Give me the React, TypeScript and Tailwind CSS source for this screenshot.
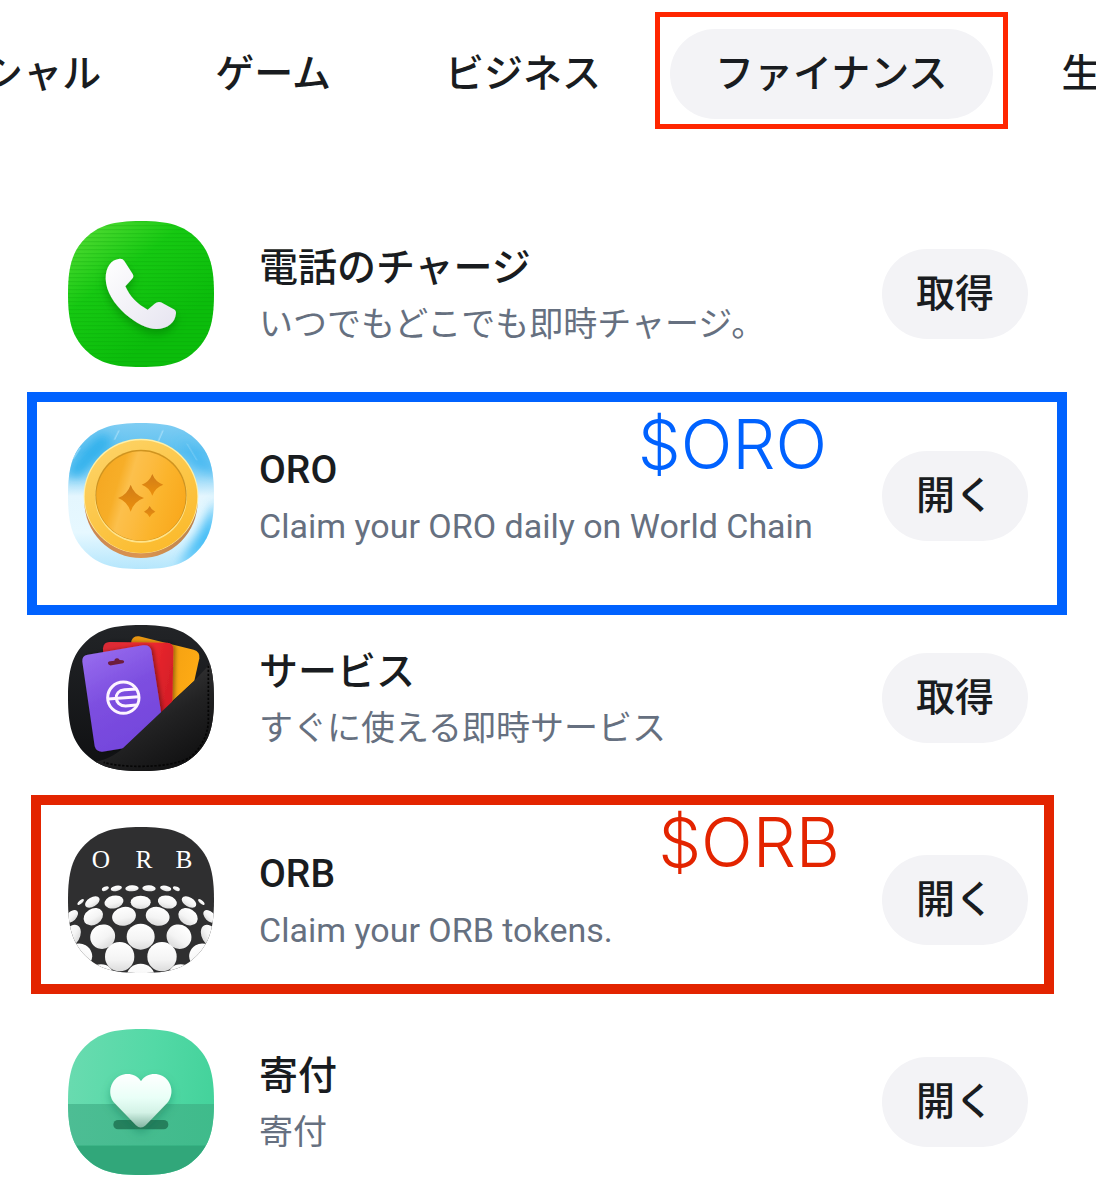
import type { ReactNode } from "react";

const SQUIRCLE =
  "M0 219C0 136 13 91 52 52S136 0 219 0 347 13 386 52 438 136 438 219 425 347 386 386 302 438 219 438 91 425 52 386 0 302 0 219Z";

function IconFrame({ id, label, children }: { id: string; label: string; children: ReactNode }) {
  return (
    <svg viewBox="0 0 438 438" role="img" aria-label={label} className="size-[146px] shrink-0">
      <defs>
        <clipPath id={id}>
          <path d={SQUIRCLE} />
        </clipPath>
      </defs>
      <g clipPath={`url(#${id})`}>{children}</g>
    </svg>
  );
}

function PhoneIcon() {
  return (
    <IconFrame id="phone-clip" label="電話">
      <defs>
        <linearGradient id="phone-bg" x1="0" y1="0" x2="0.6" y2="0.8">
          <stop offset="0" stopColor="#5fe03a" />
          <stop offset="0.5" stopColor="#16c912" />
          <stop offset="1" stopColor="#0bbd0b" />
        </linearGradient>
        <linearGradient id="phone-fg" x1="0" y1="0" x2="1" y2="1">
          <stop offset="0" stopColor="#ffffff" />
          <stop offset="1" stopColor="#e6e4f0" />
        </linearGradient>
        <pattern id="phone-lines" width="10" height="12" patternUnits="userSpaceOnUse">
          <rect width="10" height="4" fill="#069a06" opacity="0.22" />
        </pattern>
        <filter id="phone-shadow" x="-30%" y="-30%" width="160%" height="170%">
          <feDropShadow dx="0" dy="14" stdDeviation="14" floodColor="#046b04" floodOpacity="0.5" />
        </filter>
      </defs>
      <rect width="438" height="438" fill="url(#phone-bg)" />
      <rect width="438" height="438" fill="url(#phone-lines)" />
      <g transform="translate(-53 -45)">
        <path
          d="M166 218C166 182 182 161 208 158Q217 157 222 165L247 204Q252 212 245 219L225 241C238 270 260 294 292 311L313 293Q321 286 332 289L369 309Q378 313 377 322C375 350 352 369 318 369C268 369 168 296 166 218Z"
          fill="url(#phone-fg)"
          filter="url(#phone-shadow)"
        />
      </g>
    </IconFrame>
  );
}

function CoinIcon() {
  return (
    <IconFrame id="coin-clip" label="コイン">
      <defs>
        <linearGradient id="coin-sky" x1="0" y1="0" x2="0" y2="1">
          <stop offset="0" stopColor="#7fcdf3" />
          <stop offset="0.2" stopColor="#5cc0f0" />
          <stop offset="0.36" stopColor="#8fd5f7" />
          <stop offset="0.5" stopColor="#e4f6fe" />
          <stop offset="0.75" stopColor="#e6f8ff" />
          <stop offset="1" stopColor="#b5e6fc" />
        </linearGradient>
        <linearGradient id="coin-rim" x1="0.2" y1="0" x2="0.8" y2="1">
          <stop offset="0" stopColor="#fdd366" />
          <stop offset="1" stopColor="#fbb929" />
        </linearGradient>
        <linearGradient id="coin-face" x1="0" y1="0.35" x2="1" y2="0.65">
          <stop offset="0" stopColor="#f5a822" />
          <stop offset="0.22" stopColor="#f7ae28" />
          <stop offset="0.34" stopColor="#fcc04c" />
          <stop offset="0.5" stopColor="#fcbb40" />
          <stop offset="0.7" stopColor="#fbb42c" />
          <stop offset="1" stopColor="#f9a81c" />
        </linearGradient>
        <linearGradient id="coin-star" x1="0" y1="0" x2="0" y2="1">
          <stop offset="0" stopColor="#d07c18" />
          <stop offset="1" stopColor="#ec900c" />
        </linearGradient>
        <linearGradient id="coin-side" x1="0" y1="0" x2="1" y2="0">
          <stop offset="0" stopColor="#c98552" />
          <stop offset="0.5" stopColor="#dc9550" />
          <stop offset="1" stopColor="#b9834f" />
        </linearGradient>
        <filter id="coin-blur" x="-50%" y="-50%" width="200%" height="200%">
          <feGaussianBlur stdDeviation="16" />
        </filter>
      </defs>
      <rect width="438" height="438" fill="url(#coin-sky)" />
      <g transform="translate(-53 -38)">
        <path d="M40 190L150 70L190 90L90 200Z" fill="#2fb0ec" filter="url(#coin-blur)" />
        <path d="M390 90L500 170L500 190L430 170Z" fill="#45b8f2" filter="url(#coin-blur)" />
        <path d="M500 270L400 440L380 480L500 400Z" fill="#45bdf6" filter="url(#coin-blur)" />
        <g stroke="#d8f4ff" strokeWidth="3" opacity="0.7">
          <path d="M206 60L192 88" />
          <path d="M338 60L324 92" />
          <path d="M410 100L440 150" opacity="0.5" />
          <path d="M90 112L68 146" />
        </g>
        <circle cx="272" cy="273" r="170" fill="url(#coin-side)" />
        <circle cx="272" cy="257" r="172" fill="#fff0a8" />
        <circle cx="272" cy="259" r="169" fill="url(#coin-rim)" />
        <circle cx="272" cy="259" r="138" fill="#ffe48a" />
        <circle cx="272" cy="255" r="137" fill="#cf9420" />
        <circle cx="272" cy="257" r="134" fill="url(#coin-face)" />
        <g fill="url(#coin-star)">
          <path d="M241 223Q251 253 281 263Q251 273 241 304Q231 273 203 263Q231 253 241 223Z" />
          <path d="M306 191Q315 215 339 223Q315 231 306 256Q297 231 274 223Q297 215 306 191Z" />
          <path d="M298 287Q303 299 315 304Q303 309 298 321Q293 309 281 304Q293 299 298 287Z" />
        </g>
      </g>
    </IconFrame>
  );
}

function CardsIcon() {
  return (
    <IconFrame id="cards-clip" label="カード">
      <defs>
        <linearGradient id="cards-bg" x1="0" y1="0" x2="0" y2="1">
          <stop offset="0" stopColor="#222427" />
          <stop offset="1" stopColor="#0f1012" />
        </linearGradient>
        <linearGradient id="cards-purple" x1="0.1" y1="0" x2="0.5" y2="1">
          <stop offset="0" stopColor="#9a6ff0" />
          <stop offset="0.5" stopColor="#7d4fe0" />
          <stop offset="1" stopColor="#7445dc" />
        </linearGradient>
        <linearGradient id="cards-red" x1="0" y1="0" x2="1" y2="0.3">
          <stop offset="0" stopColor="#d92a35" />
          <stop offset="0.6" stopColor="#f02a30" />
          <stop offset="1" stopColor="#d81f28" />
        </linearGradient>
        <linearGradient id="cards-orange" x1="0" y1="0" x2="1" y2="0.3">
          <stop offset="0" stopColor="#e89410" />
          <stop offset="1" stopColor="#fdaa14" />
        </linearGradient>
        <linearGradient id="cards-pocket" x1="0.3" y1="0.3" x2="0.7" y2="0.9">
          <stop offset="0" stopColor="#3a3a3b" />
          <stop offset="0.5" stopColor="#222223" />
          <stop offset="1" stopColor="#131314" />
        </linearGradient>
        <filter id="cards-shadow" x="-20%" y="-20%" width="150%" height="140%">
          <feDropShadow dx="6" dy="0" stdDeviation="7" floodColor="#000000" floodOpacity="0.4" />
        </filter>
      </defs>
      <rect width="438" height="438" fill="url(#cards-bg)" />
      <g transform="translate(-53 -38)">
        <path
          d="M243 86Q248 70 266 72L430 112Q450 118 447 138L432 205L340 290L240 240Z"
          fill="url(#cards-orange)"
        />
        <path
          d="M158 108Q160 89 178 89L350 91Q369 92 369 111L366 280L300 330L160 240Z"
          fill="url(#cards-red)"
          filter="url(#cards-shadow)"
        />
        <path
          d="M96 148Q94 130 112 127L278 99Q298 96 303 114L334 312L238 405L156 418Q138 419 133 402Z"
          fill="url(#cards-purple)"
          filter="url(#cards-shadow)"
        />
        <path
          d="M174 156Q170 148 180 147L192 145Q192 139 199 138Q206 137 208 143L218 144Q225 149 218 153L184 159Q177 160 174 156Z"
          fill="#6d1d3c"
        />
        <g fill="none" stroke="#fdf4ff" strokeWidth="9">
          <circle cx="219" cy="256" r="47" />
          <path d="M173 260L265 253" />
          <path d="M260 230L222 232C188 235 190 281 226 281L258 278" />
        </g>
        <path d="M215 410L432 205Q470 165 500 130V490H100V452Q170 450 215 410Z" fill="url(#cards-pocket)" />
        <path
          d="M474 160V330Q470 390 420 435Q370 462 270 462Q200 462 160 450"
          fill="none"
          stroke="#050505"
          strokeWidth="5"
          strokeDasharray="7 5"
        />
      </g>
    </IconFrame>
  );
}

// cx, cy, rx, ry, rotation
const ORB_DOTS: [number, number, number, number, number][] = [
  [165, 223, 11, 6, -25],
  [198, 222, 17, 8, -12],
  [245, 222, 20, 9, -3],
  [296, 222, 20, 9, 3],
  [346, 222, 17, 8, 12],
  [378, 223, 11, 6, 25],
  [91, 263, 12, 5, -42],
  [126, 263, 24, 14, -30],
  [191, 263, 29, 19, -14],
  [271, 264, 30, 20, 0],
  [351, 263, 29, 19, 14],
  [416, 263, 24, 14, 30],
  [453, 263, 12, 5, 42],
  [64, 306, 23, 14, -45],
  [129, 307, 31, 24, -32],
  [221, 306, 36, 28, -12],
  [322, 306, 36, 28, 12],
  [413, 307, 31, 24, 32],
  [478, 306, 23, 14, 45],
  [64, 365, 36, 24, -60],
  [157, 367, 38, 36, -35],
  [271, 367, 42, 39, 0],
  [386, 367, 38, 36, 35],
  [479, 365, 36, 24, 60],
  [88, 424, 38, 36, 30],
  [208, 427, 44, 44, 0],
  [335, 427, 44, 44, 0],
  [454, 424, 38, 36, -30],
  [271, 486, 42, 38, 0],
  [152, 484, 38, 34, 0],
  [391, 484, 38, 34, 0],
];

function OrbIcon() {
  return (
    <IconFrame id="orb-clip" label="ORB">
      <defs>
        <linearGradient id="orb-dot" x1="0" y1="0" x2="0" y2="1">
          <stop offset="0" stopColor="#ffffff" />
          <stop offset="0.6" stopColor="#f4f4f4" />
          <stop offset="1" stopColor="#dcdcdc" />
        </linearGradient>
      </defs>
      <rect width="438" height="438" fill="#2f2f30" />
      <g transform="translate(-53 -38)">
        {ORB_DOTS.map(([cx, cy, rx, ry, angle]) => (
          <ellipse
            key={`${cx}-${cy}`}
            cx={cx}
            cy={cy}
            rx={rx}
            ry={ry}
            transform={`rotate(${angle} ${cx} ${cy})`}
            fill="url(#orb-dot)"
          />
        ))}
        <g fill="#ffffff" fontFamily="'Liberation Serif', serif" fontSize="76" textAnchor="middle">
          <text x="152" y="161">O</text>
          <text x="281" y="161">R</text>
          <text x="401" y="161">B</text>
        </g>
      </g>
    </IconFrame>
  );
}

function HeartIcon() {
  return (
    <IconFrame id="heart-clip" label="ハート">
      <defs>
        <linearGradient id="heart-bg" x1="0" y1="0" x2="1" y2="0.1">
          <stop offset="0" stopColor="#6adbb0" />
          <stop offset="0.6" stopColor="#53d9a6" />
          <stop offset="1" stopColor="#45d39c" />
        </linearGradient>
        <linearGradient id="heart-mid" x1="0" y1="0" x2="1" y2="0">
          <stop offset="0" stopColor="#4dbd94" />
          <stop offset="1" stopColor="#3fbb8b" />
        </linearGradient>
        <linearGradient id="heart-fg" x1="0" y1="0" x2="0" y2="1">
          <stop offset="0" stopColor="#ffffff" />
          <stop offset="0.45" stopColor="#e9fff7" />
          <stop offset="0.72" stopColor="#d3f2e6" />
          <stop offset="1" stopColor="#84b5a2" />
        </linearGradient>
        <filter id="heart-shadow" x="-30%" y="-30%" width="160%" height="170%">
          <feDropShadow dx="0" dy="14" stdDeviation="14" floodColor="#14704e" floodOpacity="0.4" />
        </filter>
      </defs>
      <rect width="438" height="438" fill="url(#heart-bg)" />
      <rect y="225" width="438" height="124" fill="url(#heart-mid)" />
      <rect y="349" width="438" height="89" fill="#31a77a" />
      <g transform="translate(-53 -38)">
        <rect x="189" y="311" width="165" height="28" rx="14" fill="#25805d" />
        <path
          d="M272 195C258 172 230 168 209 178C178 194 171 234 192 259L257 327Q271 340 286 327L351 259C372 234 366 194 335 178C314 168 286 172 272 195Z"
          fill="url(#heart-fg)"
          filter="url(#heart-shadow)"
        />
      </g>
    </IconFrame>
  );
}

function Callout({ className, textClassName, children }: { className: string; textClassName: string; children: string }) {
  return (
    <div className={`pointer-events-none absolute border-10 ${className}`}>
      <span className={`absolute font-['Inter'] text-[68px] leading-none font-light ${textClassName}`}>
        {children}
      </span>
    </div>
  );
}

type AppEntry = {
  title: string;
  description: string;
  action: string;
  icon: ReactNode;
  callout?: ReactNode;
};

const APPS: AppEntry[] = [
  {
    title: "電話のチャージ",
    description: "いつでもどこでも即時チャージ。",
    action: "取得",
    icon: <PhoneIcon />,
  },
  {
    title: "ORO",
    description: "Claim your ORO daily on World Chain",
    action: "開く",
    icon: <CoinIcon />,
    callout: (
      <Callout
        className="-top-[31px] right-[29px] -bottom-[46px] left-[27px] border-[#0062ff]"
        textClassName="top-[8px] right-[230px] text-[#0062ff]"
      >
        $ORO
      </Callout>
    ),
  },
  {
    title: "サービス",
    description: "すぐに使える即時サービス",
    action: "取得",
    icon: <CardsIcon />,
  },
  {
    title: "ORB",
    description: "Claim your ORB tokens.",
    action: "開く",
    icon: <OrbIcon />,
    callout: (
      <Callout
        className="-top-[32px] right-[42px] -bottom-[21px] left-[31px] border-[#e32400]"
        textClassName="top-[3px] right-[204px] text-[#e32400]"
      >
        $ORB
      </Callout>
    ),
  },
  { title: "寄付", description: "寄付", action: "開く", icon: <HeartIcon /> },
];

const TABS = ["ソーシャル", "ゲーム", "ビジネス", "ファイナンス", "生活"];
const ACTIVE_TAB = "ファイナンス";

export default function App() {
  return (
    <div className="min-h-screen overflow-hidden bg-white font-['Roboto','Noto_Sans_CJK_JP',sans-serif] text-[#191c20]">
      <nav className="-ml-[138px] flex gap-6 pt-[29px]">
        {TABS.map((tab) => (
          <div key={tab} className="relative shrink-0">
            <button
              type="button"
              aria-current={tab === ACTIVE_TAB ? "page" : undefined}
              className={`h-[90px] rounded-full px-[45px] text-[39px] font-medium whitespace-nowrap ${
                tab === ACTIVE_TAB ? "bg-[#f3f3f6]" : ""
              }`}
            >
              {tab}
            </button>
            {tab === ACTIVE_TAB && (
              <div className="pointer-events-none absolute -top-[17px] -right-[15px] -bottom-[10px] -left-[15px] border-5 border-[#ff2600]" />
            )}
          </div>
        ))}
      </nav>

      <ul className="flex flex-col gap-14 pt-[102px] pb-6">
        {APPS.map((app) => (
          <li key={app.title} className="relative flex items-center px-[68px]">
            {app.icon}
            <div className="ml-[45px] min-w-0 flex-1 pt-1">
              <h2 className="text-[39px] leading-[56px] font-medium">{app.title}</h2>
              <p className="text-[34px] leading-[56px] whitespace-nowrap text-[#667080]">{app.description}</p>
            </div>
            <button
              type="button"
              className="h-[90px] w-[146px] shrink-0 rounded-full bg-[#f3f3f6] text-[39px] font-medium"
            >
              {app.action}
            </button>
            {app.callout}
          </li>
        ))}
      </ul>
    </div>
  );
}
